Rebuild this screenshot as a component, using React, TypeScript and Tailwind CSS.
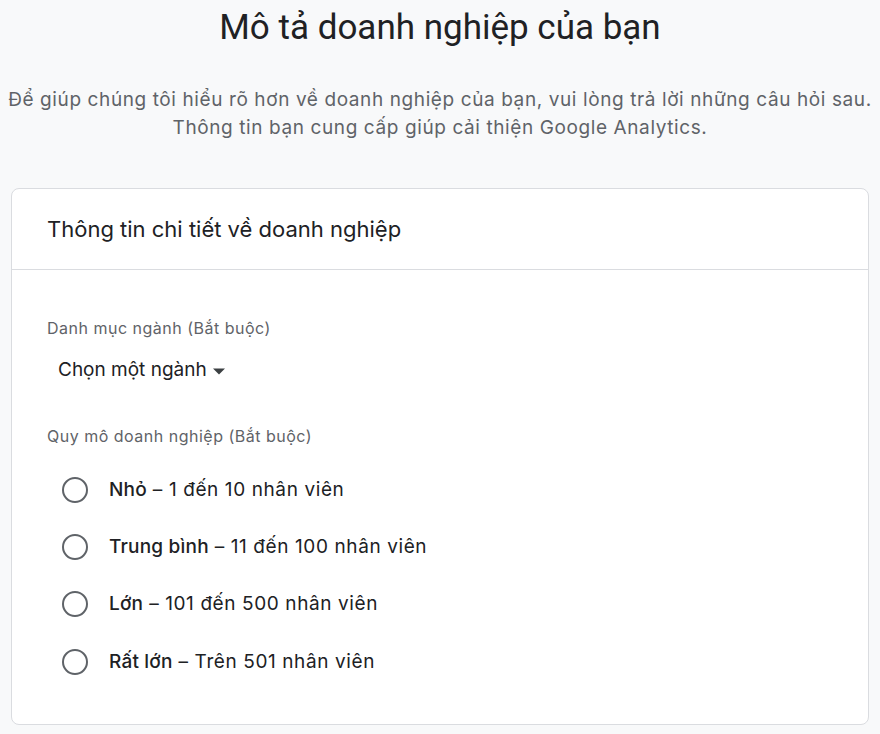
import { useState } from 'react'

const SIZES = [
  { value: 'small', name: 'Nhỏ', desc: '1 đến 10 nhân viên' },
  { value: 'medium', name: 'Trung bình', desc: '11 đến 100 nhân viên' },
  { value: 'large', name: 'Lớn', desc: '101 đến 500 nhân viên' },
  { value: 'xlarge', name: 'Rất lớn', desc: 'Trên 501 nhân viên' },
]

export default function App() {
  const [size, setSize] = useState<string | null>(null)

  return (
    <div
      className="min-h-[734px] bg-[#f8f9fa] text-[#202124]"
      style={{ fontFamily: 'Inter, Roboto, "Noto Sans", sans-serif' }}
    >
      {/* Heading */}
      <h1 className="pt-[6px] text-center font-['Roboto',sans-serif] text-[35px] leading-[44px] text-[#202124]">
        Mô tả doanh nghiệp của bạn
      </h1>
      <p className="mt-[36px] text-center text-[19px] leading-[28px] tracking-[0.6px] text-[#5f6368]">
        Để giúp chúng tôi hiểu rõ hơn về doanh nghiệp của bạn, vui lòng trả lời những câu hỏi sau.
        <br />
        Thông tin bạn cung cấp giúp cải thiện Google Analytics.
      </p>

      {/* Card */}
      <div className="mx-[11px] mt-[46px] rounded-[8px] border border-[#dadce0] bg-white">
        <div className="border-b border-[#dadce0] px-[35px] pt-[26px] pb-[26px] text-[22px] leading-[28px] text-[#202124]">
          Thông tin chi tiết về doanh nghiệp
        </div>

        <div className="px-[35px] pt-[46px] pb-[34px]">
          <div className="text-[16px] leading-[24px] tracking-[0.5px] text-[#5f6368]">Danh mục ngành (Bắt buộc)</div>
          <button className="mt-[18px] ml-[11px] flex items-center gap-[6px] text-[19px] leading-[24px] text-[#202124]">
            Chọn một ngành
            <svg width="12" height="12" viewBox="0 0 10 10" className="mt-[1px]">
              <path d="M0 3 L5 8 L10 3 Z" fill="#3c4043" />
            </svg>
          </button>

          <div className="mt-[42px] text-[16px] leading-[24px] tracking-[0.5px] text-[#5f6368]">
            Quy mô doanh nghiệp (Bắt buộc)
          </div>
          <div className="mt-[13px] flex flex-col">
            {SIZES.map((s) => (
              <label
                key={s.value}
                className="flex h-[57.3px] cursor-pointer items-center gap-[21px] pl-[15px]"
                onClick={() => setSize(s.value)}
              >
                <span className="flex h-[26px] w-[26px] items-center justify-center rounded-full border-[2.5px] border-[#5f6368]">
                  {size === s.value && <span className="h-[12px] w-[12px] rounded-full bg-[#1a73e8]" />}
                </span>
                <span className="text-[19px] leading-[24px] text-[#202124]">
                  <span className="font-medium tracking-[0.2px]">{s.name}</span>
                  <span className="tracking-[0.6px]"> – {s.desc}</span>
                </span>
              </label>
            ))}
          </div>
        </div>
      </div>
    </div>
  )
}
